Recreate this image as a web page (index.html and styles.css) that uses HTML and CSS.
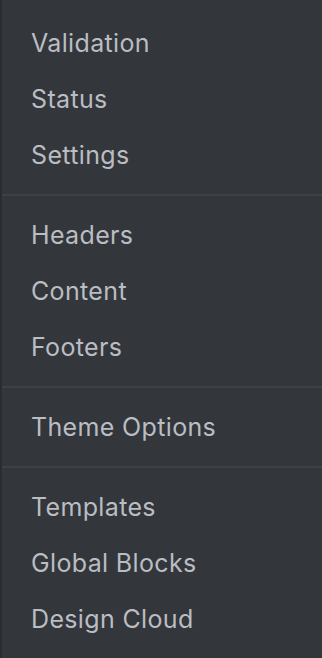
FILE: index.html
```html
<!DOCTYPE html>
<html>
<head>
<meta charset="utf-8">
<link rel="stylesheet" href="styles.css">
</head>
<body>
<nav class="menu">
  <ul class="group first">
    <li>Validation</li>
    <li>Status</li>
    <li>Settings</li>
  </ul>
  <ul class="group">
    <li>Headers</li>
    <li>Content</li>
    <li>Footers</li>
  </ul>
  <ul class="group">
    <li>Theme Options</li>
  </ul>
  <ul class="group">
    <li>Templates</li>
    <li>Global Blocks</li>
    <li>Design Cloud</li>
  </ul>
</nav>
</body>
</html>
```
FILE: styles.css
```css
html, body {
  margin: 0;
  padding: 0;
  height: 100%;
  background: #33363b;
}
.menu {
  height: 658px;
  box-sizing: border-box;
  border-left: 2px solid #2a2c31;
  background: #33363b;
  font-family: Inter, "Liberation Sans", sans-serif;
  font-size: 25px;
  letter-spacing: 0.35px;
  color: #babdc2;
}
.group {
  list-style: none;
  margin: 0;
  padding: 11px 0;
  border-top: 2px solid #3d4046;
}
.group.first {
  border-top: none;
  padding-top: 15px;
}
.group li {
  height: 56px;
  line-height: 56px;
  padding-left: 29px;
}
```
